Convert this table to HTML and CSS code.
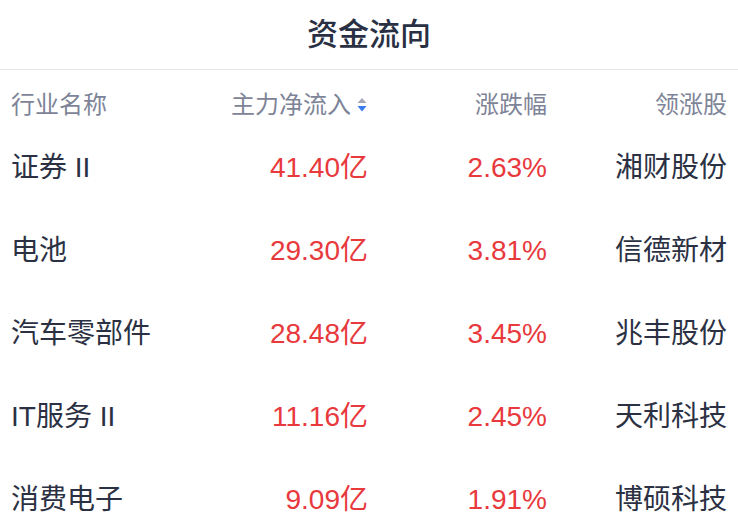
FILE: index.html
```html
<!DOCTYPE html>
<html lang="zh">
<head>
<meta charset="utf-8">
<link rel="stylesheet" href="styles.css">
</head>
<body>
<div class="panel">
  <div class="title">资金流向</div>
  <div class="row head">
    <div class="c1">行业名称</div>
    <div class="c2">主力净流入<svg class="sort" width="12" height="16" viewBox="0 0 12 16"><polygon points="6,1 10.5,6 1.5,6" fill="#a3a8b6"/><polygon points="1.5,9 10.5,9 6,14.5" fill="#3a7cf0"/></svg></div>
    <div class="c3">涨跌幅</div>
    <div class="c4">领涨股</div>
  </div>
  <div class="row">
    <div class="c1">证券 II</div>
    <div class="c2 red">41.40亿</div>
    <div class="c3 red">2.63%</div>
    <div class="c4">湘财股份</div>
  </div>
  <div class="row">
    <div class="c1">电池</div>
    <div class="c2 red">29.30亿</div>
    <div class="c3 red">3.81%</div>
    <div class="c4">信德新材</div>
  </div>
  <div class="row">
    <div class="c1">汽车零部件</div>
    <div class="c2 red">28.48亿</div>
    <div class="c3 red">3.45%</div>
    <div class="c4">兆丰股份</div>
  </div>
  <div class="row">
    <div class="c1">IT服务 II</div>
    <div class="c2 red">11.16亿</div>
    <div class="c3 red">2.45%</div>
    <div class="c4">天利科技</div>
  </div>
  <div class="row">
    <div class="c1">消费电子</div>
    <div class="c2 red">9.09亿</div>
    <div class="c3 red">1.91%</div>
    <div class="c4">博硕科技</div>
  </div>
</div>
</body>
</html>
```
FILE: styles.css
```css
html, body {
  margin: 0;
  padding: 0;
  background: #ffffff;
  overflow: hidden;
}
body {
  font-family: "Liberation Sans", "Noto Sans CJK SC", sans-serif;
  color: #2b3143;
}
.panel {
  width: 738px;
}
.title {
  height: 69px;
  border-bottom: 1px solid #e6e6e9;
  display: flex;
  align-items: center;
  justify-content: center;
  font-size: 31px;
  font-weight: 500;
  color: #2a3043;
  line-height: 1;
}
.row {
  display: grid;
  grid-template-columns: 180px 177px 179px 180px;
  padding: 0 11px;
  height: 83px;
  align-items: center;
  font-size: 28px;
  line-height: 34px;
}
.row.head {
  height: 56px;
  padding-top: 21px;
  box-sizing: border-box;
  align-items: start;
  font-size: 24px;
  line-height: 28px;
  color: #7e8497;
}
.c1 { text-align: left; white-space: nowrap; }
.c2, .c3, .c4 { text-align: right; white-space: nowrap; }
.head .c2 {
  display: flex;
  align-items: center;
  justify-content: flex-end;
}
.sort {
  flex: none;
  display: block;
  width: 12px;
  height: 16px;
  margin-left: 5px;
}
.red { color: #e8393d; }
```
